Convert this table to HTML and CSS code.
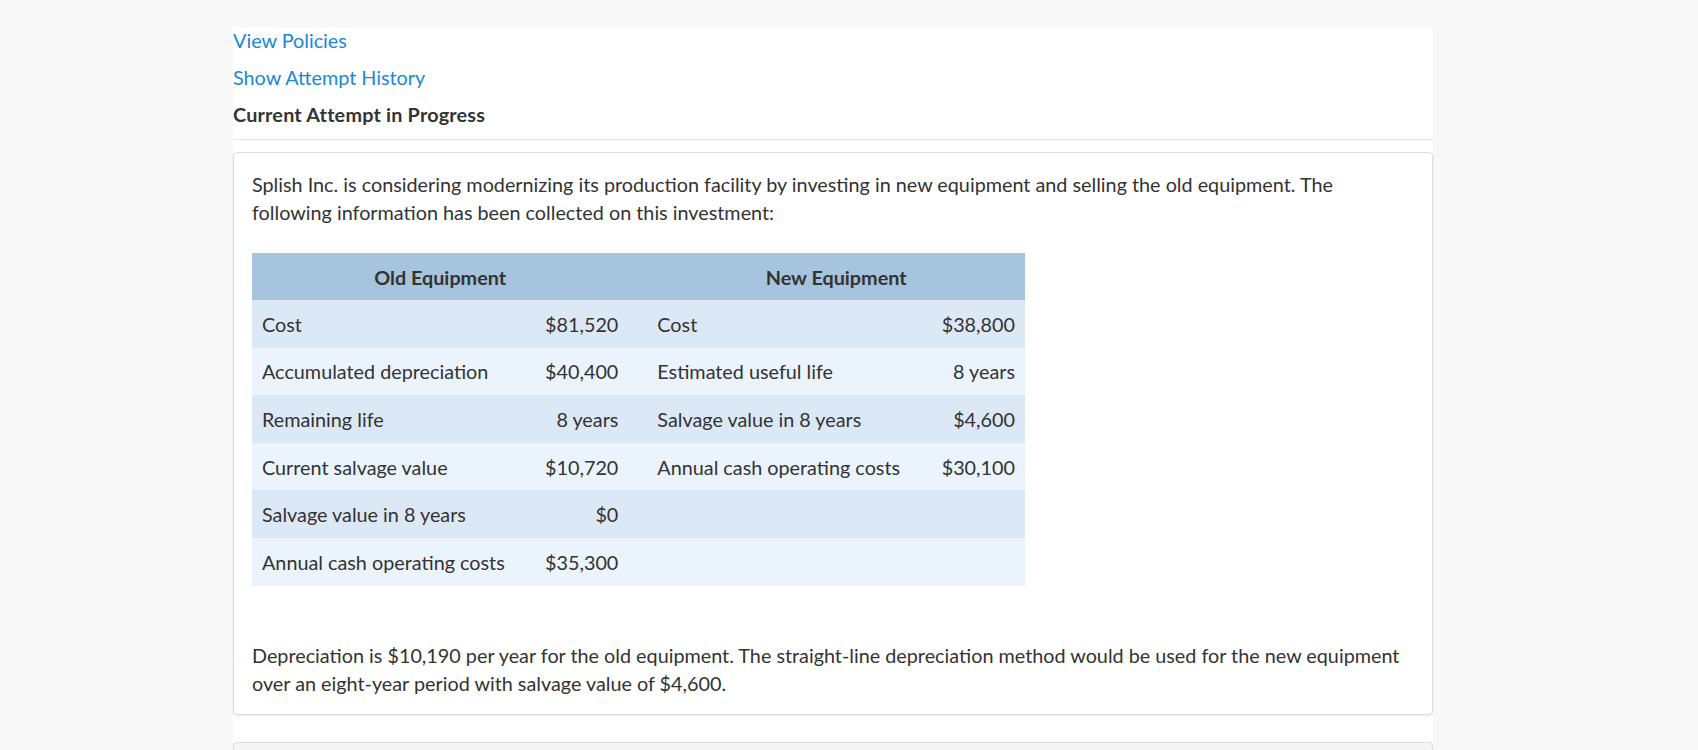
FILE: index.html
```html
<!DOCTYPE html>
<html>
<head>
<meta charset="utf-8">
<link rel="stylesheet" href="styles.css">
</head>
<body>
<div class="page">
  <div class="nav">
    <a class="link" href="#">View Policies</a>
    <a class="link" href="#">Show Attempt History</a>
    <div class="attempt">Current Attempt in Progress</div>
  </div>
  <div class="divider"></div>
  <div class="card">
    <p class="para">Splish Inc. is considering modernizing its production facility by investing in new equipment and selling the old equipment. The following information has been collected on this investment:</p>
    <table class="data">
      <thead>
        <tr>
          <th colspan="2" class="h-old">Old Equipment</th>
          <th colspan="2" class="h-new">New Equipment</th>
        </tr>
      </thead>
      <tbody>
        <tr><td class="c1">Cost</td><td class="c2">$81,520</td><td class="c3">Cost</td><td class="c4">$38,800</td></tr>
        <tr><td class="c1">Accumulated depreciation</td><td class="c2">$40,400</td><td class="c3">Estimated useful life</td><td class="c4">8 years</td></tr>
        <tr><td class="c1">Remaining life</td><td class="c2">8 years</td><td class="c3">Salvage value in 8 years</td><td class="c4">$4,600</td></tr>
        <tr><td class="c1">Current salvage value</td><td class="c2">$10,720</td><td class="c3">Annual cash operating costs</td><td class="c4">$30,100</td></tr>
        <tr><td class="c1">Salvage value in 8 years</td><td class="c2">$0</td><td class="c3"></td><td class="c4"></td></tr>
        <tr><td class="c1">Annual cash operating costs</td><td class="c2">$35,300</td><td class="c3"></td><td class="c4"></td></tr>
      </tbody>
    </table>
    <p class="para para-last">Depreciation is $10,190 per year for the old equipment. The straight-line depreciation method would be used for the new equipment over an eight-year period with salvage value of $4,600.</p>
  </div>
  <div class="card card-next"></div>
</div>
</body>
</html>
```

FILE: styles.css
```css
html, body {
  margin: 0;
  padding: 0;
  background: #f8f8f8;
  font-family: Lato, "Open Sans", sans-serif;
  color: #333333;
}
body {
  padding-top: 27px;
}
.page {
  width: 1200px;
  margin-left: 233px;
  background: #ffffff;
  min-height: 760px;
}
.nav {
  display: flex;
  flex-direction: column;
  gap: 10px;
}
.link {
  font-size: 19.8px;
  line-height: 27px;
  color: #1a87d9;
  text-decoration: none;
}
.attempt {
  font-size: 19.8px;
  line-height: 27px;
  font-weight: 700;
  letter-spacing: 0.2px;
  color: #333333;
}
.divider {
  margin-top: 11px;
  height: 1px;
  background: #e6e6e6;
}
.card {
  margin-top: 12px;
  border: 1px solid #dcdcdc;
  border-radius: 4px;
  box-shadow: 0 1px 2px rgba(0,0,0,0.08);
  padding: 17px 18px 17px 18px;
  background: #ffffff;
}
.card-next {
  margin-top: 27px;
  padding: 0;
  height: 20px;
  background: #f5f5f5;
}
.para {
  margin: 0;
  font-size: 19.8px;
  line-height: 28px;
}
.data {
  margin-top: 27px;
  border-collapse: collapse;
  width: 773px;
  font-size: 19.8px;
}
.data th {
  background: #a6c4dd;
  height: 47px;
  padding: 0;
  font-weight: 700;
  text-align: center;
}
.h-old { width: 376px; }
.h-new { padding-left: 19px !important; }
.data td {
  height: 47.6px;
  padding: 0 10px;
}
.data tbody tr:nth-child(odd) td { background: #dde8f7; }
.data tbody tr:nth-child(even) td { background: #ebf3fd; }
.c1 { width: 263px; text-align: left; }
.c2 { width: 73px; text-align: right; }
.c3 { text-align: left; padding-left: 29px !important; }
.c4 { text-align: right; }
.para-last {
  margin-top: 55px;
}
```
